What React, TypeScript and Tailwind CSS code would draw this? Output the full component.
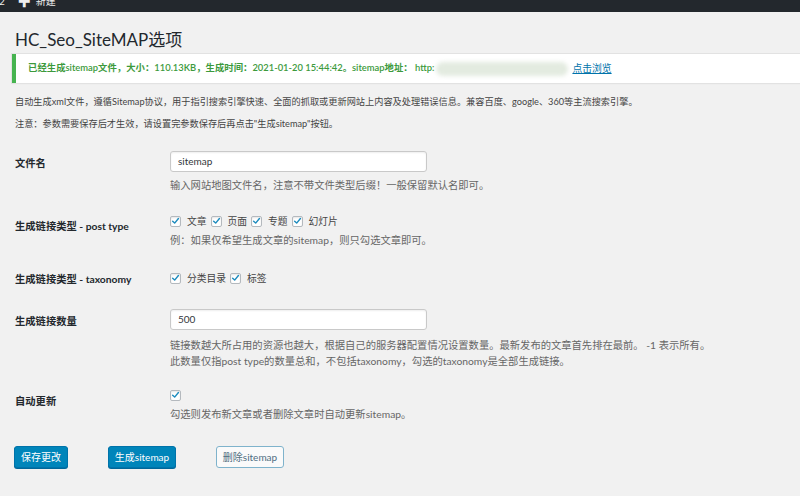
import { ReactNode } from "react";

const Checkbox = () => (
  <span className="inline-flex h-[11px] w-[11px] shrink-0 items-center justify-center rounded-[2px] border border-[#b4b9be] bg-white shadow-[inset_0_1px_2px_rgba(0,0,0,0.1)]">
    <svg viewBox="0 0 12 12" className="h-[10px] w-[10px]">
      <path
        d="M2.2 6.2 L4.9 8.8 L9.9 2.6"
        fill="none"
        stroke="#1e8cbe"
        strokeWidth="1.9"
        strokeLinecap="round"
        strokeLinejoin="round"
      />
    </svg>
  </span>
);

const CheckItem = ({ label }: { label: string }) => (
  <span className="mr-[4px] inline-flex items-center">
    <Checkbox />
    <span className="ml-[6px]">{label}</span>
  </span>
);

const Row = (props: { label: ReactNode; labelPad: string; className?: string; children: ReactNode }) => (
  <div className={`flex ${props.className ?? ""}`}>
    <div className={`w-[155px] shrink-0 text-[10.3px] leading-[16px] font-bold text-[#23282d] ${props.labelPad}`}>
      {props.label}
    </div>
    <div className="flex-1">{props.children}</div>
  </div>
);

const Desc = ({ children, className }: { children: ReactNode; className?: string }) => (
  <p className={`text-[10.3px] leading-[16px] text-[#666] ${className ?? ""}`}>{children}</p>
);

const TextInput = ({ value }: { value: string }) => (
  <div className="flex h-[21px] w-[257px] items-center rounded-[3px] border border-[#c9c9c9] bg-white px-[7px] text-[10px] text-[#32373c] shadow-[inset_0_1px_2px_rgba(0,0,0,0.07)]">
    {value}
  </div>
);

export default function App() {
  return (
    <div className="h-[496px] w-full overflow-hidden bg-[#f1f1f1] font-['Lato','Noto_Sans_CJK_SC',sans-serif] text-[#444]">
      {/* admin bar, cut at top */}
      <div className="h-[12px] overflow-hidden bg-[#23282d]">
        <div className="-mt-[11px] flex h-[24px] items-center text-[10px] text-[#eee]">
          <span className="-ml-[1px]">2</span>
          <span className="ml-[13px] text-[13px] font-bold leading-none">✚</span>
          <span className="ml-[5px]">新建</span>
        </div>
      </div>

      <h1 className="mt-[16px] ml-[15px] h-[24px] text-[17px] leading-[24px] text-[#23282d]">HC_Seo_SiteMAP选项</h1>

      <div className="mt-[2px] ml-[12px] -mr-[20px] flex h-[29px] items-center border-l-4 border-[#46b450] bg-white pl-[12px] text-[9.4px] font-semibold text-[#3c9a3c] shadow-[0_1px_1px_rgba(0,0,0,0.08)] outline outline-1 outline-[#e2e2e2]">
        <span>已经生成sitemap文件，大小：110.13KB，生成时间：2021-01-20 15:44:42。sitemap地址： http:</span>
        <span className="ml-[2px] h-[14px] w-[132px] rounded-full bg-[#e3ebe0] blur-[2px]" />
        <a className="ml-[4px] text-[9.8px] font-normal text-[#0073aa] underline">点击浏览</a>
      </div>

      <div className="ml-[15px]">
        <p className="mt-[10px] text-[9.2px] leading-[18px]">
          自动生成xml文件，遵循Sitemap协议，用于指引搜索引擎快速、全面的抓取或更新网站上内容及处理错误信息。兼容百度、google、360等主流搜索引擎。
        </p>
        <p className="mt-[4px] text-[9.2px] leading-[18px]">
          注意：参数需要保存后才生效，请设置完参数保存后再点击"生成sitemap"按钮。
        </p>

        <Row label="文件名" labelPad="pt-[4px]" className="mt-[18px]">
          <TextInput value="sitemap" />
          <Desc className="mt-[5px]">输入网站地图文件名，注意不带文件类型后缀！一般保留默认名即可。</Desc>
        </Row>

        <Row label="生成链接类型 - post type" labelPad="pt-[5px]" className="mt-[20px]">
          <div className="flex h-[16px] items-center text-[9.75px] text-[#444]">
            <CheckItem label="文章" />
            <CheckItem label="页面" />
            <CheckItem label="专题" />
            <CheckItem label="幻灯片" />
          </div>
          <Desc className="mt-[3px]">例：如果仅希望生成文章的sitemap，则只勾选文章即可。</Desc>
        </Row>

        <Row label="生成链接类型 - taxonomy" labelPad="pt-[1px]" className="mt-[22px]">
          <div className="flex h-[16px] items-center text-[9.75px] text-[#444]">
            <CheckItem label="分类目录" />
            <CheckItem label="标签" />
          </div>
        </Row>

        <Row label="生成链接数量" labelPad="pt-[4px]" className="mt-[22px]">
          <TextInput value="500" />
          <Desc className="mt-[7px]">
            链接数越大所占用的资源也越大，根据自己的服务器配置情况设置数量。最新发布的文章首先排在最前。 -1 表示所有。
          </Desc>
          <Desc>此数量仅指post type的数量总和，不包括taxonomy，勾选的taxonomy是全部生成链接。</Desc>
        </Row>

        <Row label="自动更新" labelPad="pt-[6px]" className="mt-[18px]">
          <div className="flex h-[16px] items-center">
            <Checkbox />
          </div>
          <Desc className="mt-[3px]">勾选则发布新文章或者删除文章时自动更新sitemap。</Desc>
        </Row>
      </div>

      <div className="mt-[24px] ml-[14px] flex gap-[40px] text-[10px]">
        <button className="h-[22px] w-[54px] rounded-[3px] border border-[#0073aa] bg-[#0085ba] text-white shadow-[0_1px_0_#006799]">
          保存更改
        </button>
        <button className="h-[22px] w-[68px] rounded-[3px] border border-[#0073aa] bg-[#0085ba] text-white shadow-[0_1px_0_#006799]">
          生成sitemap
        </button>
        <button className="h-[22px] w-[68px] rounded-[3px] border border-[#7fb3cc] bg-[#fafafa] text-[#4f6f82]">
          删除sitemap
        </button>
      </div>
    </div>
  );
}
